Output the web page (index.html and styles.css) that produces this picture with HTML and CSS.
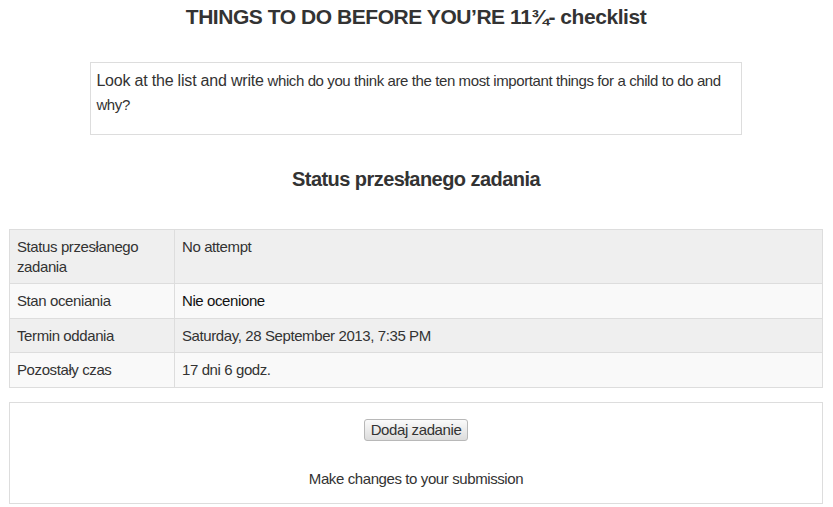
FILE: index.html
```html
<!DOCTYPE html>
<html>
<head>
<meta charset="utf-8">
<link rel="stylesheet" href="styles.css">
</head>
<body>
<div class="page">
  <h2 class="title">THINGS TO DO BEFORE YOU’RE 11¾- checklist</h2>
  <div class="intro"><span class="big">Look at the list and write</span> <span>which do you think are the ten most important things for a child to do and</span> <span>why?</span></div>
  <h3 class="status-title">Status przesłanego zadania</h3>
  <table class="status">
    <tr class="odd"><td class="c0">Status przesłanego zadania</td><td class="c1">No attempt</td></tr>
    <tr class="even"><td class="c0">Stan oceniania</td><td class="c1 dark">Nie ocenione</td></tr>
    <tr class="odd"><td class="c0">Termin oddania</td><td class="c1">Saturday, 28 September 2013, 7:35 PM</td></tr>
    <tr class="even"><td class="c0">Pozostały czas</td><td class="c1">17 dni 6 godz.</td></tr>
  </table>
  <div class="submit-box">
    <button class="btn">Dodaj zadanie</button>
    <div class="hint">Make changes to your submission</div>
  </div>
</div>
</body>
</html>
```
FILE: styles.css
```css
html, body { margin: 0; padding: 0; background: #fff; }
body {
  font-family: "Liberation Sans", Arial, sans-serif;
  font-size: 15px;
  letter-spacing: -0.4px;
  color: #333;
}
.page {
  margin: 0 10px 0 9px;
  padding-top: 1px;
}
.title {
  font-size: 21px;
  font-weight: bold;
  text-align: center;
  margin: 5px 0 0;
  line-height: 22px;
  letter-spacing: -0.45px;
}
.intro {
  width: 80%;
  box-sizing: border-box;
  margin: 34px auto 0;
  border: 1px solid #ddd;
  padding: 6px 5px 0;
  height: 73px;
  line-height: 24px;
  color: #333;
}
.intro .big { font-size: 16px; letter-spacing: -0.2px; }
.status-title {
  font-size: 20px;
  font-weight: bold;
  text-align: center;
  margin: 32px 0 0;
  line-height: 24px;
  letter-spacing: -0.55px;
}
.status {
  width: 100%;
  border-collapse: collapse;
  margin-top: 38px;
  border: 1px solid #ddd;
}
.status td {
  border: 1px solid #ddd;
  padding: 7px 7px 7px;
  line-height: 20px;
  vertical-align: top;
  text-align: left;
}
.status td.c0 { width: 150px; }
.status tr.odd { background: #efefef; }
.status tr.even { background: #f9f9f9; }
.status tr:first-child td { padding-bottom: 6px; }
.status tr:nth-child(3) td { padding-bottom: 6px; }
.status td.dark { color: #111; }
.submit-box {
  margin-top: 14px;
  border: 1px solid #ddd;
  height: 102px;
  text-align: center;
  padding-top: 16px;
  box-sizing: border-box;
}
.btn {
  font-family: "Liberation Sans", Arial, sans-serif;
  font-size: 15px;
  letter-spacing: -0.4px;
  color: #333;
  height: 22px;
  padding: 0 6px;
  border: 1px solid #b8b8b8;
  border-radius: 3px;
  background: linear-gradient(#fafafa, #dcdcdc);
  line-height: 20px;
}
.hint {
  margin-top: 28px;
  line-height: 20px;
}
```
